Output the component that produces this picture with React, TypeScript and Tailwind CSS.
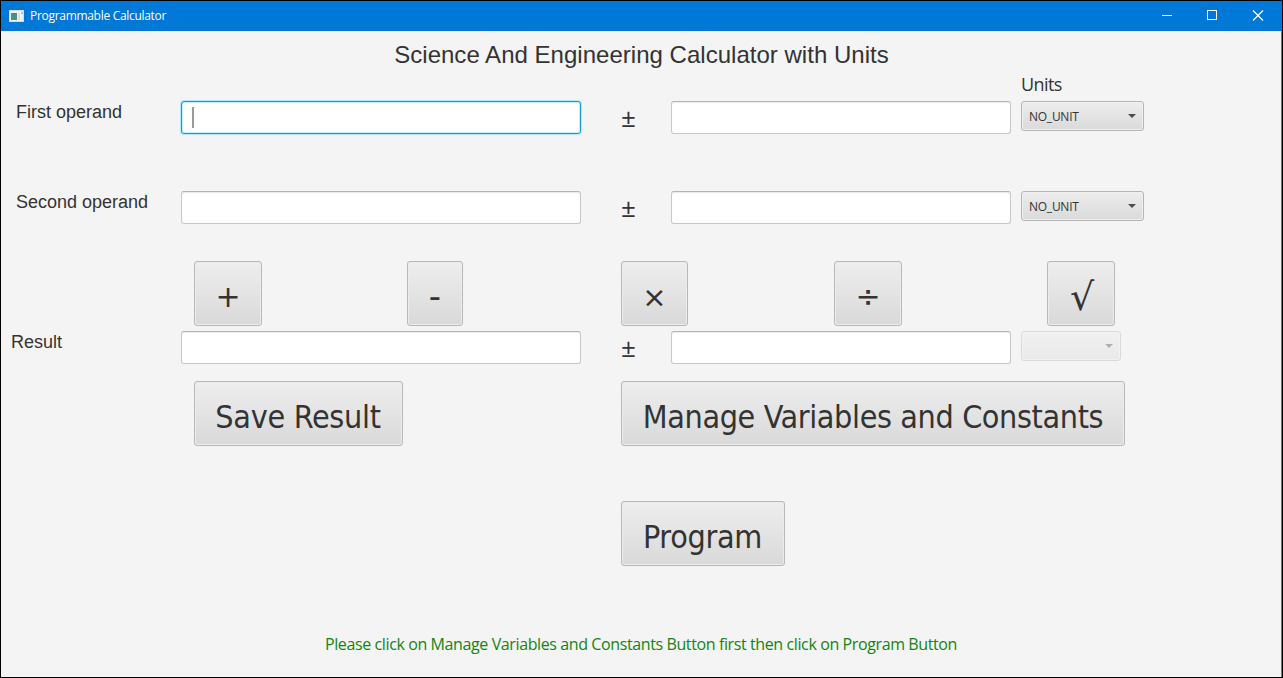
import React from "react";

const segoe = "font-['Open_Sans','Noto_Sans',sans-serif]";
const arial = "font-['Liberation_Sans',Arial,sans-serif]";
const condensed = "font-['DejaVu_Sans_Condensed','DejaVu_Sans',sans-serif] [font-stretch:condensed]";
const regular = "font-['DejaVu_Sans',sans-serif]";

function TitleBar() {
  return (
    <header className="flex h-[30px] shrink-0 items-center bg-[#0078d7] text-white">
      <svg className="mb-px ml-2 h-3 w-[15px]" viewBox="0 0 15 12" shapeRendering="crispEdges">
        <rect width="15" height="12" fill="#d5dce0" />
        <rect x="1" y="1" width="13" height="10" fill="#f2f2ee" />
        <rect x="2" y="3" width="6" height="7" fill="#4a8f88" />
        <rect x="9" y="3" width="2" height="7" fill="#e0dfda" />
        <rect x="12" y="2" width="2" height="2" fill="#b9c4cc" />
      </svg>
      <h1 className={`ml-[6px] flex-1 text-[12px] leading-[16px] tracking-[-0.3px] ${segoe}`}>
        <span>Programmable Calculator</span>
      </h1>
      <div className="flex pr-[15px]">
        <svg className="h-[30px] w-[46px]" viewBox="0 0 46 30" shapeRendering="crispEdges">
          <path d="M20 14.5h10" stroke="white" fill="none" />
        </svg>
        <svg className="h-[30px] w-[45px]" viewBox="0 0 45 30" shapeRendering="crispEdges">
          <path d="M19.5 9.5h9v9h-9z" stroke="white" fill="none" />
        </svg>
        <svg className="h-[30px] w-[34px]" viewBox="0 0 34 30">
          <path d="M20 9.5l10 10m0-10l-10 10" stroke="white" strokeWidth="1.2" fill="none" />
        </svg>
      </div>
    </header>
  );
}

function Field({ wide = false, focused = false }: { wide?: boolean; focused?: boolean }) {
  return (
    <div
      className={`flex h-[33px] shrink-0 items-center rounded-[3px] border bg-white ${wide ? "w-[400px]" : "w-[340px]"} ${
        focused
          ? "border-[#1b96c8] shadow-[0_0_0_1px_#b4e8fb,inset_0_0_0_1px_#c5f2fd]"
          : "border-[#c8c8c8] border-t-[#b4b4b4] shadow-[inset_0_1px_1px_#ececec]"
      }`}
    >
      {focused && <span className="ml-[10px] h-[21px] w-[2px] bg-[#999]" />}
    </div>
  );
}

function Combo({ value, disabled = false }: { value?: string; disabled?: boolean }) {
  return (
    <div
      className={`ml-[10px] flex h-[30px] shrink-0 items-center justify-between rounded-[3px] border border-[#b5b5b5] bg-linear-to-b from-[#ededed] to-[#dadada] pl-[7px] pr-[7px] shadow-[inset_0_0_0_1px_#f0f0f0] ${
        disabled ? "w-[100px] opacity-40" : "w-[123px]"
      }`}
    >
      <span className={`pt-[2px] text-[12px] tracking-[-0.25px] text-[#333] ${segoe}`}>{value}</span>
      <svg className="h-1 w-2" viewBox="0 0 8 4">
        <path d="M0 0h8L4 4z" fill="#4c4c4c" />
      </svg>
    </div>
  );
}

function OperandRow({
  label,
  className,
  labelClass,
  focused,
  combo,
}: {
  label: string;
  className: string;
  labelClass: string;
  focused?: boolean;
  combo: React.ReactNode;
}) {
  return (
    <div className={`flex shrink-0 items-start ${className}`}>
      <div className={`w-[180px] text-[18px] leading-[22px] ${labelClass} ${arial}`}>
        <span>{label}</span>
      </div>
      <Field wide focused={focused} />
      <div className={`w-[90px] pl-[40px] pt-px text-[26px] leading-[30px] ${segoe}`}>±</div>
      <Field />
      {combo}
    </div>
  );
}

function Button({ children, className }: { children: React.ReactNode; className: string }) {
  return (
    <button
      className={`flex h-[65px] shrink-0 items-center justify-center whitespace-nowrap rounded-[3px] border border-[#b8b8b8] bg-linear-to-b from-[#eeeeee] to-[#d9d9d9] leading-[40px] shadow-[inset_0_0_0_1px_#ececec] ${className}`}
    >
      <span>{children}</span>
    </button>
  );
}

export default function App() {
  return (
    <div className="flex h-[678px] w-[1283px] flex-col overflow-hidden border border-black bg-[#f4f4f4] text-[#333]">
      <TitleBar />
      <main className="flex flex-1 flex-col border-r border-[#1b8fd0]">
        <h2
          className={`flex h-[40px] shrink-0 items-center justify-center pl-px pt-[8px] text-[24px] leading-[32px] tracking-[0.02px] ${arial}`}
        >
          <span>Science And Engineering Calculator with Units</span>
        </h2>
        <div
          className={`h-[30px] shrink-0 pl-[1020px] pt-px text-[18px] leading-[24px] tracking-[-0.6px] ${segoe}`}
        >
          <span>Units</span>
        </div>
        <OperandRow
          label="First operand"
          className="h-[90px]"
          labelClass="pl-[15px]"
          focused
          combo={<Combo value="NO_UNIT" />}
        />
        <OperandRow
          label="Second operand"
          className="h-[70px]"
          labelClass="pl-[15px]"
          combo={<Combo value="NO_UNIT" />}
        />
        <div className="flex h-[70px] shrink-0 pl-[193px]">
          <Button className={`mr-[145px] w-[68px] pt-[7px] text-[30px] ${regular}`}>+</Button>
          <Button className={`mr-[158px] w-[56px] pt-[4px] text-[34px] ${regular}`}>-</Button>
          <Button className={`mr-[146px] w-[67px] pt-[6px] text-[29px] ${regular}`}>×</Button>
          <Button className={`mr-[145px] w-[68px] pt-[7px] text-[30px] ${regular}`}>÷</Button>
          <Button className={`w-[68px] pt-[7px] pl-[2px] text-[38px] ${regular}`}>√</Button>
        </div>
        <OperandRow label="Result" className="h-[50px]" labelClass="pl-[10px]" combo={<Combo disabled />} />
        <div className="flex h-[120px] shrink-0 pl-[193px]">
          <Button className={`mr-[218px] w-[209px] pt-[7px] pr-px text-[32px] tracking-[-0.3px] ${condensed}`}>
            Save Result
          </Button>
          <Button className={`w-[504px] pt-[7px] text-[32px] tracking-[-0.38px] ${condensed}`}>
            Manage Variables and Constants
          </Button>
        </div>
        <div className="flex h-[120px] shrink-0 pl-[620px]">
          <Button className={`w-[164px] pt-[7px] pr-px text-[32px] tracking-[-0.3px] ${condensed}`}>Program</Button>
        </div>
        <p
          className={`flex justify-center pt-[11px] text-[16px] leading-[24px] tracking-[-0.39px] text-[#128512] ${segoe}`}
        >
          <span>Please click on Manage Variables and Constants Button first then click on Program Button</span>
        </p>
      </main>
    </div>
  );
}
